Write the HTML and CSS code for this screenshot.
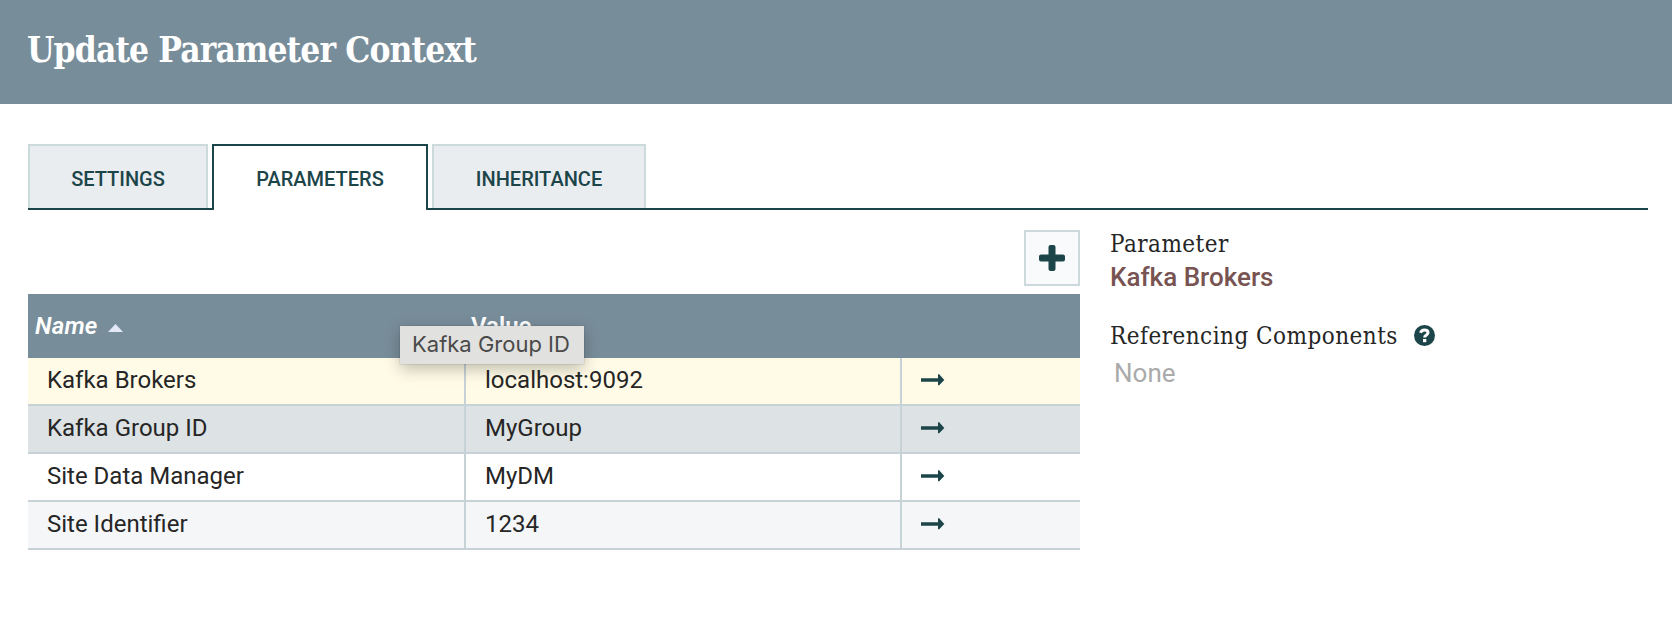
FILE: index.html
```html
<!DOCTYPE html>
<html lang="en">
<head>
<meta charset="utf-8">
<title>Update Parameter Context</title>
<link rel="stylesheet" href="styles.css">
</head>
<body>
<svg class="defs" width="0" height="0">
  <symbol id="arrow" viewBox="0 0 24 12"><path d="M0 4.200h17V.3h1.200L23.300 6l-5.100 5.300H17V7.800H0z"/></symbol>
</svg>
<header class="dialog-header"><h1 class="title">Update Parameter Context</h1></header>
<main class="content">
  <nav class="tabs">
    <div class="tab tab-settings">SETTINGS</div>
    <div class="tab tab-parameters active">PARAMETERS</div>
    <div class="tab tab-inheritance">INHERITANCE</div>
  </nav>
  <div class="panes">
    <section class="parameters">
      <button class="add" aria-label="Add parameter">
        <svg width="26" height="26" viewBox="0 0 26 26"><path d="M11.500 0h3a2 2 0 0 1 2 2v7.500h7.500a2 2 0 0 1 2 2v3a2 2 0 0 1-2 2h-7.500V24a2 2 0 0 1-2 2h-3a2 2 0 0 1-2-2v-7.500H2a2 2 0 0 1-2-2v-3a2 2 0 0 1 2-2h7.500V2a2 2 0 0 1 2-2z"/></svg>
      </button>
      <div class="table">
        <div class="row head">
          <div class="head-cell sorted"><span class="head-name">Name</span><svg class="sort" width="15" height="8" viewBox="0 0 15 8"><path d="M0 8L7.500 0 15 8z"/></svg></div>
          <div class="head-cell head-value">Value</div>
          <div class="head-cell"></div>
          <div class="tooltip">Kafka Group ID</div>
        </div>
        <div class="row selected"><div class="cell">Kafka Brokers</div><div class="cell">localhost:9092</div><div class="cell"><svg class="arrow"><use href="#arrow"/></svg></div></div>
        <div class="row hovered"><div class="cell">Kafka Group ID</div><div class="cell">MyGroup</div><div class="cell"><svg class="arrow"><use href="#arrow"/></svg></div></div>
        <div class="row"><div class="cell">Site Data Manager</div><div class="cell">MyDM</div><div class="cell"><svg class="arrow"><use href="#arrow"/></svg></div></div>
        <div class="row odd"><div class="cell">Site Identifier</div><div class="cell">1234</div><div class="cell"><svg class="arrow"><use href="#arrow"/></svg></div></div>
      </div>
    </section>
    <aside class="details">
      <div class="label">Parameter</div>
      <div class="name">Kafka Brokers</div>
      <div class="label referencing"><span class="label-referencing">Referencing Components</span>
        <svg class="help" width="21" height="21" viewBox="0 0 21 21"><circle cx="10.500" cy="10.500" r="10.500" fill="#1c4549"/><path d="M6.500 7.800C7.200 5.800 8.600 5 10.400 5c2.100 0 3.600 1.100 3.600 2.700 0 2.400-3.400 2-3.400 4.900" fill="none" stroke="#fff" stroke-width="3"/><path d="M9 14h3.300v3.200H9z" fill="#fff"/></svg>
      </div>
      <div class="none">None</div>
    </aside>
  </div>
</main>
</body>
</html>
```
FILE: styles.css
```css
* { box-sizing: border-box; }
body { margin: 0; background: #fff; color: #262626; font-family: Roboto, sans-serif; font-size: 24px; }
.defs { position: absolute; }
.dialog-header { height: 104px; background: #788d9a; padding: 28px 27px 0; }
.title { margin: 0; color: #fff; font: bold 35px/44px "Roboto Slab", "DejaVu Serif Condensed", "DejaVu Serif", serif; letter-spacing: -.87px; white-space: nowrap; }
.content { padding: 40px 24px 0 28px; }
.tabs { display: flex; gap: 4px; height: 66px; border-bottom: 2px solid #1c4549; }
.tab { height: 64px; border: 2px solid #ccdadb; border-bottom: 0; background: #e9edf0; color: #1c4549; font-size: 20px; font-weight: 500; line-height: 66px; text-align: center; white-space: nowrap; }
.tab-settings { width: 180px; }
.tab-parameters { width: 216px; }
.tab-inheritance { width: 214px; }
.tab.active { height: 66px; background: #fff; border-color: #1c4549; border-radius: 0 0 2px 2px; }
.panes { display: flex; gap: 30px; padding-top: 20px; }
.parameters { width: 1052px; display: flex; flex-direction: column; gap: 8px; }
.add { width: 56px; height: 56px; padding: 0 0 1px; align-self: flex-end; display: flex; align-items: center; justify-content: center; border: 2px solid #ccdadb; background: #f9fafb; fill: #1c4549; }
.row { display: grid; grid-template-columns: 438px 436px 178px; height: 48px; border-bottom: 2px solid #c7d2d7; background: #fff; }
.row.head { position: relative; height: 64px; border: 0; background: #788d9a; color: #fff; font-weight: 600; }
.head-cell { padding-left: 5px; line-height: 64px; }
.sorted { display: flex; align-items: center; gap: 10px; padding-left: 7px; font-style: italic; }
.head-name { letter-spacing: .2px; }
.sort { fill: #e3e8f7; margin-top: 4px; }
.tooltip { position: absolute; left: 372px; top: 32px; width: 184px; height: 38px; padding-left: 12px; background: #e1e1df; color: #4a4a4a; font: 22px/36px Inter, sans-serif; white-space: nowrap; box-shadow: 0 0 1px rgba(0,0,0,.35), 0 5px 16px rgba(0,0,0,.25); }
.cell { padding-left: 19px; line-height: 45px; border-right: 2px solid #c7d2d7; white-space: nowrap; }
.cell:last-child { border: 0; display: flex; align-items: center; }
.selected { background: #fffbe7; }
.hovered { background: #dde2e4; }
.odd { background: #f4f6f8; }
.arrow { width: 24px; height: 12px; fill: #1c4549; margin-top: -3px; }
.details { white-space: nowrap; }
.label { margin-top: -2px; font: 24px/32px "Roboto Slab", "DejaVu Serif Condensed", "DejaVu Serif", serif; letter-spacing: .47px; }
.name { color: #775351; font-size: 26px; font-weight: 500; line-height: 34px; }
.referencing { display: flex; align-items: center; gap: 16px; margin-top: 26px; }
.help { margin-top: -1px; }
.none { color: #aaa; font-size: 26px; line-height: 38px; padding-left: 4px; margin-top: 2px; }
```
